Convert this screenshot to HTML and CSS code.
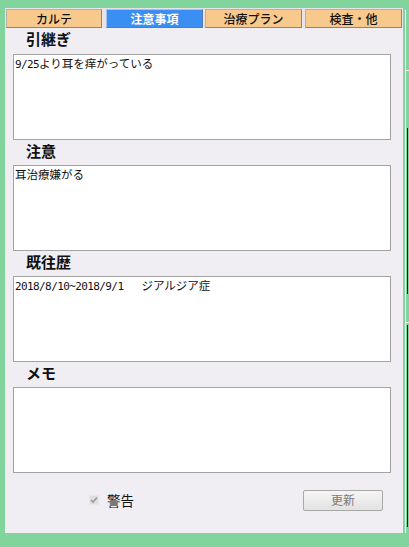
FILE: index.html
```html
<!DOCTYPE html>
<html lang="ja">
<head>
<meta charset="utf-8">
<link rel="stylesheet" href="styles.css">
</head>
<body>
<div class="screen">
  <div class="panel">
    <div class="tabs">
      <div class="tab t-a">カルテ</div>
      <div class="tab t-b active">注意事項</div>
      <div class="tab t-c">治療プラン</div>
      <div class="tab t-d">検査・他</div>
    </div>
    <div class="body">
      <div class="section">
        <div class="label">引継ぎ</div>
        <div class="box"><span class="hw">9/25</span>より耳を痒がっている</div>
      </div>
      <div class="section">
        <div class="label">注意</div>
        <div class="box">耳治療嫌がる</div>
      </div>
      <div class="section">
        <div class="label">既往歴</div>
        <div class="box"><span class="hw">2018/8/10~2018/9/1   </span>ジアルジア症</div>
      </div>
      <div class="section">
        <div class="label">メモ</div>
        <div class="box"></div>
      </div>
      <div class="footer">
        <label class="check">
          <span class="cb"><svg width="8" height="8" viewBox="0 0 8 8"><path d="M1 4 L3 6 L7 1.5" fill="none" stroke="#9a9a9a" stroke-width="1.6"/></svg></span>
          <span class="cb-text">警告</span>
        </label>
        <div class="btn">更新</div>
      </div>
    </div>
  </div>
  <div class="edge">
    <span class="line white-v"></span>
    <span class="line tick t1"></span>
    <span class="line dark d1"></span>
    <span class="line tick t2"></span>
    <span class="line dark d2"></span>
  </div>
</div>
</body>
</html>
```
FILE: styles.css
```css
html, body {
  margin: 0;
  padding: 0;
}
body {
  width: 409px;
  height: 547px;
  background: #80d49c;
  font-family: "Noto Sans CJK JP", "DejaVu Sans", sans-serif;
  overflow: hidden;
}
.screen {
  display: flex;
  padding: 8px 0 0 5px;
  height: 547px;
  box-sizing: border-box;
}
.panel {
  width: 398px;
  height: 525px;
  background: #f1eef3;
  display: flex;
  flex-direction: column;
}
.tabs {
  display: flex;
  padding: 1px 0 0 1px;
  height: 20px;
  box-sizing: border-box;
  background: #e6e4e8;
}
.tab {
  height: 19px;
  width: 97px;
  box-sizing: border-box;
  background: #f8c98d;
  border: 1px solid #b8b0a8;
  border-right-color: #8c8680;
  border-bottom-color: #8c8680;
  font-size: 12px;
  line-height: 17px;
  text-align: center;
  color: #111;
  font-weight: 500;
}
.t-a { width: 96px; }
.t-b { margin-left: 4px; }
.t-c { margin-left: 2px; }
.t-d { margin-left: 3px; }
.tab.active {
  background: #3b8ff2;
  color: #fff;
  font-weight: 700;
  border-color: #a6c4ea #5a7aa8 #5a7aa8 #a6c4ea;
}
.body {
  padding: 0 12px 0 8px;
  display: flex;
  flex-direction: column;
}
.section {
  display: flex;
  flex-direction: column;
}
.label {
  height: 26px;
  padding-left: 13px;
  font-size: 15px;
  font-weight: 700;
  line-height: 22px;
  color: #111;
}
.section + .section .label {
  height: 25px;
}
.box {
  height: 86px;
  box-sizing: border-box;
  background: #fff;
  border: 1px solid #a3a3a3;
  padding: 1px 1px;
  font-family: "Noto Sans CJK JP", sans-serif;
  font-size: 11.5px;
  line-height: 14px;
  color: #111;
  white-space: pre;
}
.hw {
  font-family: "DejaVu Sans Mono", "Liberation Mono", monospace;
  font-size: 11px;
  letter-spacing: -0.6px;
}
.footer {
  display: flex;
  align-items: center;
  height: 38px;
  margin-top: 8px;
}
.check {
  display: flex;
  align-items: center;
  margin-left: 76px;
}
.cb {
  width: 10px;
  height: 10px;
  box-sizing: border-box;
  background: #dedede;
  border: 1px solid #e8e8e8;
  display: flex;
  align-items: center;
  justify-content: center;
}
.cb-text {
  margin-left: 8px;
  font-size: 13.5px;
  color: #111;
}
.btn {
  margin-left: auto;
  margin-right: 8px;
  width: 80px;
  height: 21px;
  box-sizing: border-box;
  border: 1px solid #a8a8a8;
  border-radius: 2px;
  background: linear-gradient(#f6f6f6, #e2e2e2);
  color: #7a7a7a;
  font-size: 12px;
  line-height: 18px;
  text-align: center;
}
.edge {
  position: relative;
  width: 6px;
  height: 539px;
}
.line {
  position: absolute;
  display: block;
}
.white-v {
  left: 2px;
  top: 2px;
  width: 1px;
  height: 523px;
  background: #fff;
}
.tick {
  left: 2px;
  width: 4px;
  height: 1px;
  background: #fff;
}
.t1 { top: 62px; }
.t2 { top: 314px; }
.dark {
  left: 4px;
  width: 1px;
  background: #1a1a1a;
}
.d1 { top: 120px; height: 166px; }
.d2 { top: 317px; height: 202px; }
```
